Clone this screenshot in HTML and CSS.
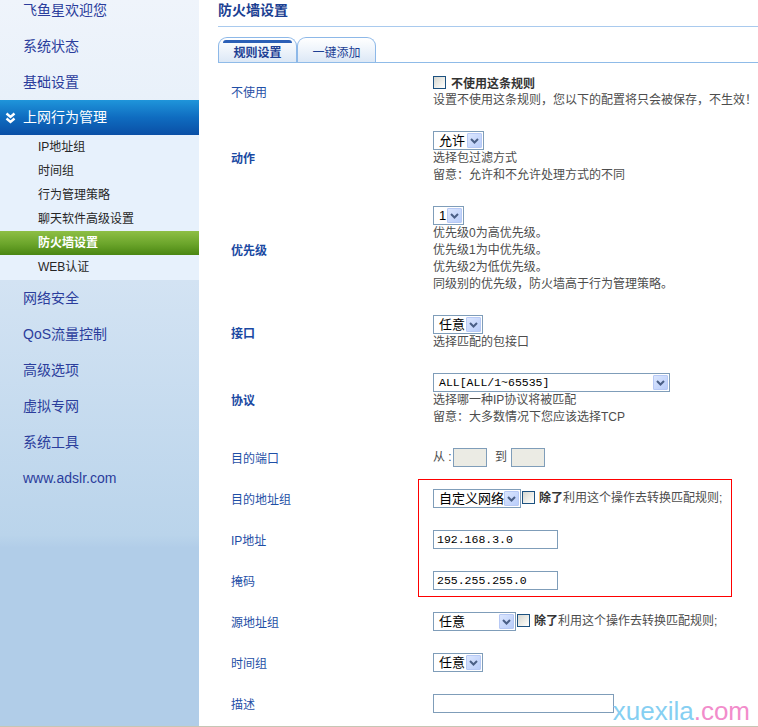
FILE: index.html
```html
<!DOCTYPE html>
<html lang="zh-CN">
<head>
    <meta charset="UTF-8">
    <title>防火墙设置</title>
    <link rel="stylesheet" href="styles.css">
</head>
<body>
<div class="page">
    <div class="sidebar">
        <ul class="nav">
            <li class="nav-item">飞鱼星欢迎您</li>
            <li class="nav-item">系统状态</li>
            <li class="nav-item">基础设置</li>
            <li class="nav-head">
                <svg class="chev" width="11" height="12" viewBox="0 0 11 12"><path d="M1.5 1.5 L5.5 5 L9.5 1.5 M1.5 6.5 L5.5 10 L9.5 6.5" fill="none" stroke="#fff" stroke-width="2.4"/></svg>
                上网行为管理
            </li>
            <li class="sub">
                <div class="sub-item">IP地址组</div>
                <div class="sub-item">时间组</div>
                <div class="sub-item">行为管理策略</div>
                <div class="sub-item">聊天软件高级设置</div>
                <div class="sub-item active">防火墙设置</div>
                <div class="sub-item">WEB认证</div>
            </li>
            <li class="nav-item">网络安全</li>
            <li class="nav-item">QoS流量控制</li>
            <li class="nav-item">高级选项</li>
            <li class="nav-item">虚拟专网</li>
            <li class="nav-item">系统工具</li>
            <li class="nav-item">www.adslr.com</li>
        </ul>
    </div>

    <div class="main">
        <div class="title">防火墙设置</div>
        <div class="tabs">
            <div class="tab active">规则设置</div>
            <div class="tab">一键添加</div>
        </div>

        <table class="form">
            <tr>
                <td class="label">不使用</td>
                <td class="value">
                    <div class="line-cb"><span class="cb"></span><b class="cb-text">不使用这条规则</b></div>
                    <div class="line">设置不使用这条规则，您以下的配置将只会被保存，不生效！</div>
                </td>
            </tr>
            <tr>
                <td class="label strong">动作</td>
                <td class="value">
                    <div class="ctl"><span class="sel w-51"><span class="txt">允许</span><span class="arr"><svg width="15" height="15" viewBox="0 0 15 15"><path d="M4 6 L7.5 9.5 L11 6" fill="none" stroke="#4a5f86" stroke-width="2"/></svg></span></span></div>
                    <div class="line">选择包过滤方式</div>
                    <div class="line">留意：允许和不允许处理方式的不同</div>
                </td>
            </tr>
            <tr>
                <td class="label strong">优先级</td>
                <td class="value">
                    <div class="ctl"><span class="sel w-31"><span class="txt">1</span><span class="arr"><svg width="15" height="15" viewBox="0 0 15 15"><path d="M4 6 L7.5 9.5 L11 6" fill="none" stroke="#4a5f86" stroke-width="2"/></svg></span></span></div>
                    <div class="line">优先级0为高优先级。</div>
                    <div class="line">优先级1为中优先级。</div>
                    <div class="line">优先级2为低优先级。</div>
                    <div class="line">同级别的优先级，防火墙高于行为管理策略。</div>
                </td>
            </tr>
            <tr>
                <td class="label strong">接口</td>
                <td class="value">
                    <div class="ctl"><span class="sel w-50"><span class="txt">任意</span><span class="arr"><svg width="15" height="15" viewBox="0 0 15 15"><path d="M4 6 L7.5 9.5 L11 6" fill="none" stroke="#4a5f86" stroke-width="2"/></svg></span></span></div>
                    <div class="line">选择匹配的包接口</div>
                </td>
            </tr>
            <tr>
                <td class="label strong">协议</td>
                <td class="value">
                    <div class="ctl"><span class="sel w-237"><span class="txt mono">ALL[ALL/1~65535]</span><span class="arr"><svg width="15" height="15" viewBox="0 0 15 15"><path d="M4 6 L7.5 9.5 L11 6" fill="none" stroke="#4a5f86" stroke-width="2"/></svg></span></span></div>
                    <div class="line">选择哪一种IP协议将被匹配</div>
                    <div class="line">留意：大多数情况下您应该选择TCP</div>
                </td>
            </tr>
            <tr>
                <td class="label">目的端口</td>
                <td class="value">
                    <div class="ctl">
                        <span class="port-from">从 :</span>
                        <input class="inp port" type="text" disabled>
                        <span class="port-to">到</span>
                        <input class="inp port" type="text" disabled>
                    </div>
                </td>
            </tr>
            <tr>
                <td class="label">目的地址组</td>
                <td class="value">
                    <div class="ctl">
                        <span class="sel w-88"><span class="txt">自定义网络</span><span class="arr"><svg width="15" height="15" viewBox="0 0 15 15"><path d="M4 6 L7.5 9.5 L11 6" fill="none" stroke="#4a5f86" stroke-width="2"/></svg></span></span>
                        <span class="cb"></span>
                        <span class="except"><b>除了</b>利用这个操作去转换匹配规则;</span>
                    </div>
                </td>
            </tr>
            <tr>
                <td class="label">IP地址</td>
                <td class="value">
                    <div class="ctl"><input class="inp ip mono" type="text" value="192.168.3.0"></div>
                </td>
            </tr>
            <tr>
                <td class="label">掩码</td>
                <td class="value">
                    <div class="ctl"><input class="inp ip mono" type="text" value="255.255.255.0"></div>
                </td>
            </tr>
            <tr>
                <td class="label">源地址组</td>
                <td class="value">
                    <div class="ctl">
                        <span class="sel w-83"><span class="txt">任意</span><span class="arr"><svg width="15" height="15" viewBox="0 0 15 15"><path d="M4 6 L7.5 9.5 L11 6" fill="none" stroke="#4a5f86" stroke-width="2"/></svg></span></span>
                        <span class="cb"></span>
                        <span class="except"><b>除了</b>利用这个操作去转换匹配规则;</span>
                    </div>
                </td>
            </tr>
            <tr>
                <td class="label">时间组</td>
                <td class="value">
                    <div class="ctl"><span class="sel w-50"><span class="txt">任意</span><span class="arr"><svg width="15" height="15" viewBox="0 0 15 15"><path d="M4 6 L7.5 9.5 L11 6" fill="none" stroke="#4a5f86" stroke-width="2"/></svg></span></span></div>
                </td>
            </tr>
            <tr>
                <td class="label">描述</td>
                <td class="value">
                    <div class="ctl"><input class="inp desc" type="text"></div>
                </td>
            </tr>
        </table>

        <div class="mark"></div>
        <div class="watermark"><span class="wm-a">xuexila</span><span class="wm-b">.com</span></div>
    </div>
</div>
</body>
</html>
```

FILE: styles.css
```css
body {
    margin: 0;
    font-family: "Liberation Sans", "Noto Sans CJK SC", sans-serif;
    font-size: 12px;
    overflow: hidden;
}

.page {
    display: flex;
    height: 726px;
    border-bottom: 1px solid #c6c6b4;
}

/* left menu */
.sidebar {
    width: 199px;
    flex-shrink: 0;
    background: linear-gradient(to bottom, #eff4fb 0, #e9f1fa 95px, #d3e3f3 280px, #bad4eb 535px, #b1cde8 548px, #b1cde8 100%);
}

.nav {
    list-style: none;
    margin: -8px 0 0;
    padding: 0;
}

.nav-item {
    height: 36px;
    line-height: 36px;
    padding-left: 23px;
    font-size: 14px;
    color: #2b3d9c;
}

.nav-head {
    height: 35px;
    line-height: 35px;
    padding-left: 23px;
    font-size: 14px;
    color: #fff;
    position: relative;
    background: linear-gradient(to bottom, #1f95da 0, #0f6cc0 50%, #0a4fa6 100%);
}

.chev {
    position: absolute;
    left: 5px;
    top: 12px;
}

.sub {
    background-color: #e7f1fc;
    padding-bottom: 1px;
}

.sub-item {
    height: 24px;
    line-height: 24px;
    padding-left: 38px;
    font-size: 12px;
    color: #262626;
}

.sub-item.active {
    color: #fff;
    font-weight: bold;
    background: linear-gradient(to bottom, #8ebf45 0, #6aa42a 55%, #4a8612 100%);
}

/* content */
.main {
    flex: 1;
    position: relative;
    padding-left: 19px;
    background-color: #fff;
}

.title {
    font-size: 14px;
    font-weight: bold;
    color: #1b3f92;
    line-height: 20px;
    padding-bottom: 6px;
    border-bottom: 1px solid #a9caee;
}

.tabs {
    display: flex;
    margin-top: 10px;
    border-bottom: 1px solid #8fbbe8;
}

.tab {
    position: relative;
    width: 79px;
    height: 25px;
    box-sizing: border-box;
    padding-top: 7px;
    line-height: 17px;
    text-align: center;
    color: #1d3f94;
    border: 1px solid #8db8e8;
    border-bottom: none;
    border-radius: 9px 9px 0 0;
    background: linear-gradient(to bottom, #ffffff 0, #eef4fb 50%, #dce8f6 100%);
}

.tab.active {
    font-weight: bold;
}

.tab.active::before {
    content: "";
    position: absolute;
    top: 2px;
    left: 4px;
    right: 4px;
    height: 3px;
    border-radius: 6px 6px 0 0;
    background-color: #2b5fb6;
}

.form {
    border-collapse: collapse;
    border-spacing: 0;
}

.form td {
    padding: 10px 0 11px;
}

.label {
    width: 202px;
    padding-left: 13px !important;
    vertical-align: middle;
    color: #1f4fa6;
}

.label.strong {
    font-weight: bold;
    color: #1a49a2;
}

.value {
    vertical-align: top;
    color: #4d4d4d;
}

.line {
    line-height: 17px;
    white-space: nowrap;
}

.line-cb {
    height: 19px;
    display: flex;
    align-items: center;
}

.cb-text {
    margin-left: 5px;
    color: #333;
}

.ctl {
    height: 20px;
    display: flex;
    align-items: flex-end;
    white-space: nowrap;
}

.sel {
    display: flex;
    align-items: center;
    height: 19px;
    box-sizing: border-box;
    border: 1px solid #7f9db9;
    background-color: #fff;
}

.sel .txt {
    flex: 1;
    padding-left: 5px;
    font-size: 13px;
    color: #000;
    line-height: 17px;
}

.sel .arr {
    width: 15px;
    height: 15px;
    margin-right: 1px;
    box-sizing: border-box;
    border: 1px solid #b7c9f5;
    background: linear-gradient(135deg, #dbe6fe 0, #b9cdfa 100%);
    border-radius: 1px;
}

.sel .arr svg {
    display: block;
    margin: -1px 0 0 -1px;
}

.w-31 { width: 31px; }
.w-50 { width: 50px; }
.w-51 { width: 51px; }
.w-83 { width: 83px; }
.w-88 { width: 88px; }
.w-237 { width: 237px; }

.mono {
    font-family: "Liberation Mono", monospace !important;
    font-size: 11.5px !important;
}

.cb {
    display: inline-block;
    width: 13px;
    height: 13px;
    box-sizing: border-box;
    border: 1px solid #1c5180;
    background: linear-gradient(135deg, #d6d6cf 0, #f4f4f0 70%, #ffffff 100%);
    flex-shrink: 0;
}

.ctl .cb {
    margin: 0 0 4px 1px;
}

.except {
    margin-left: 4px;
    line-height: 19px;
}

.except b {
    color: #333;
}

.inp {
    height: 19px;
    box-sizing: border-box;
    border: 1px solid #7f9db9;
    margin: 0;
    padding: 0 3px;
    background-color: #fff;
    color: #000;
    outline: none;
}

.port {
    width: 34px;
    background-color: #ebebe4;
}

.port-from {
    width: 20px;
    line-height: 19px;
}

.port-to {
    margin: 0 4px 0 8px;
    line-height: 19px;
}

.ip {
    width: 125px;
}

.desc {
    width: 181px;
}

/* annotation frame drawn on the screenshot */
.mark {
    position: absolute;
    left: 219px;
    top: 479px;
    width: 312px;
    height: 116px;
    border: 1px solid #ff0000;
}

.watermark {
    position: absolute;
    right: 8px;
    bottom: 0;
    font-family: "Liberation Sans", sans-serif;
    font-size: 26px;
    line-height: 30px;
}

.wm-a {
    color: #86cff2;
}

.wm-b {
    color: #f28ccb;
}
```
